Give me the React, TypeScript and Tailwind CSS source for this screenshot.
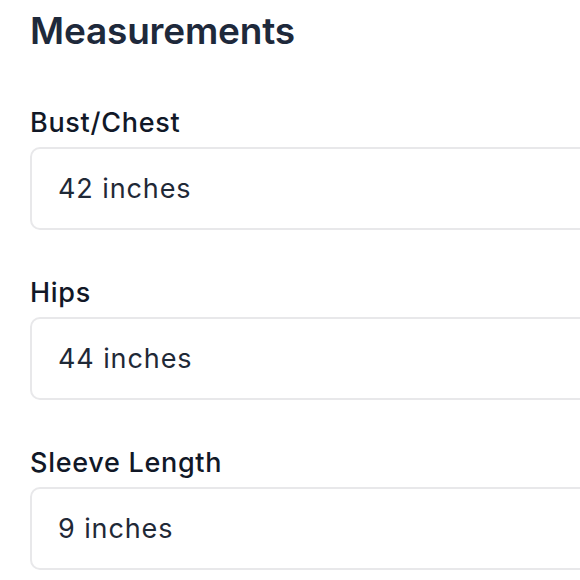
const fields = [
  { label: 'Bust/Chest', value: '42 inches' },
  { label: 'Hips', value: '44 inches' },
  { label: 'Sleeve Length', value: '9 inches' },
];

export default function App() {
  return (
    <div className="w-[580px] h-[580px] overflow-hidden bg-white pl-[30px] pt-[9px]" style={{ fontFamily: 'Inter, "Noto Sans", sans-serif' }}>
      <h2 className="text-[37px] leading-[44px] font-semibold text-[#1e293b] tracking-[-0.2px]">Measurements</h2>
      <div className="mt-[54px] flex flex-col gap-[47px] w-[600px]">
        {fields.map((f) => (
          <div key={f.label}>
            <label className="block text-[27px] leading-[32px] font-medium text-[#111827] tracking-[0.7px]">{f.label}</label>
            <div className="mt-[8px] h-[83px] rounded-[10px] border-2 border-[#e8e8ea] bg-white flex items-center px-[26px]">
              <span className="text-[27px] leading-[32px] text-[#1f2937] tracking-[0.9px]">{f.value}</span>
            </div>
          </div>
        ))}
      </div>
    </div>
  );
}
